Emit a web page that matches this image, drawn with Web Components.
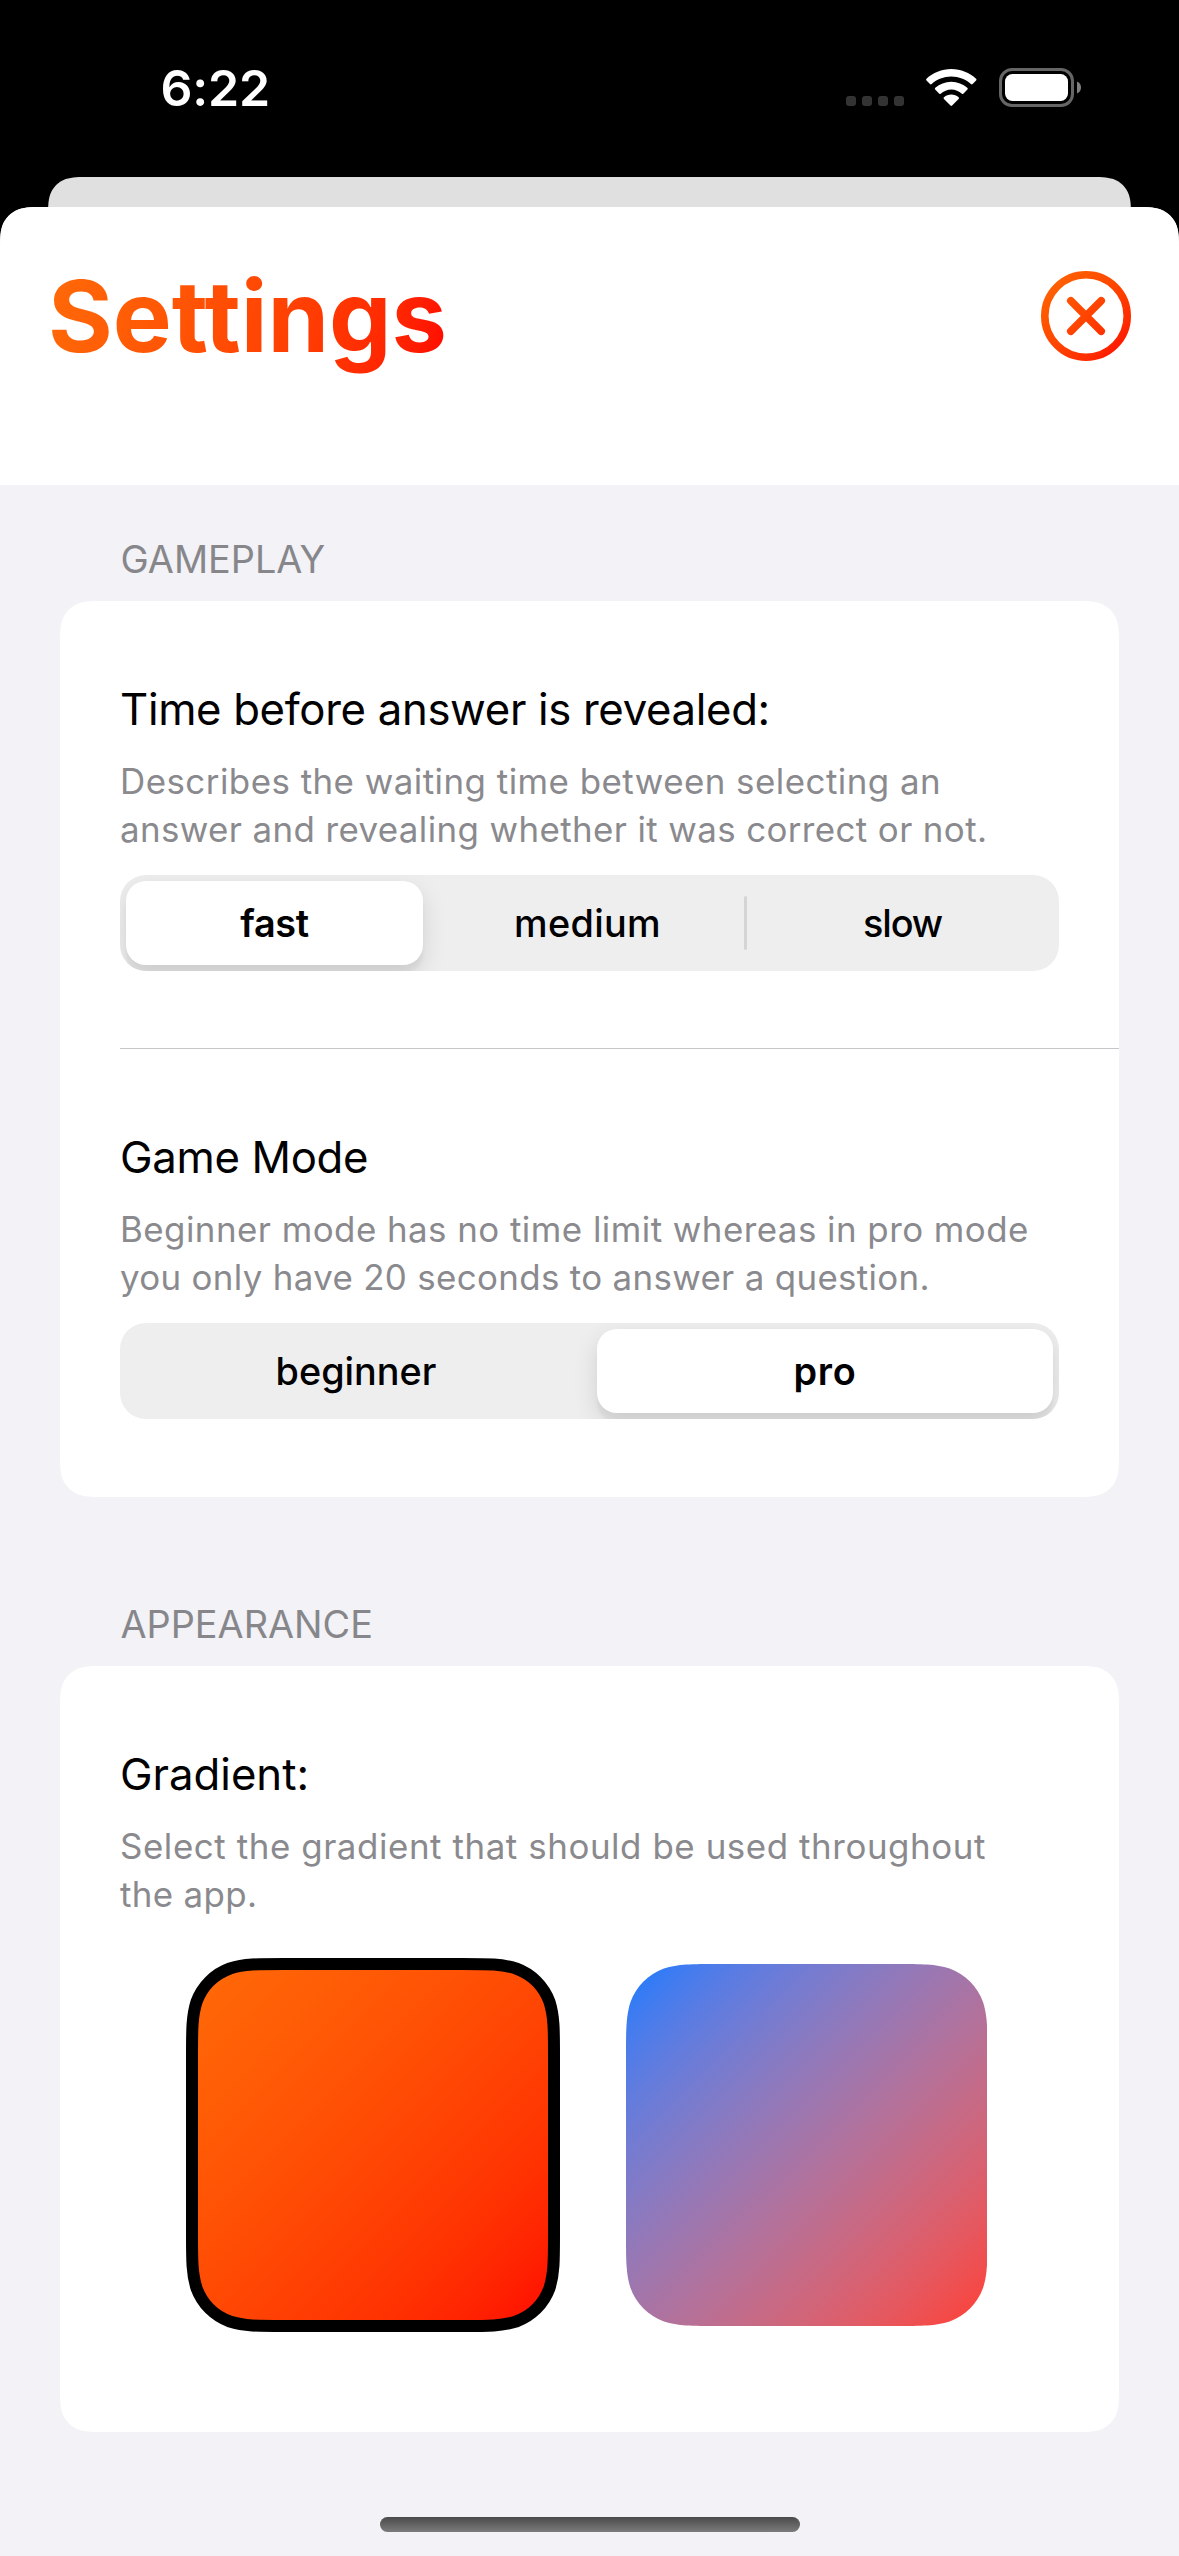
<!DOCTYPE html>
<html lang="en">
<head>
<meta charset="utf-8">
<title>Settings</title>
<style>
  body { margin: 0; background: #000; font-family: Inter, "Liberation Sans", sans-serif; color: #000; }
</style>
</head>
<body>
<settings-app>
  <status-bar time="6:22"></status-bar>
  <modal-sheet heading="Settings">
    <settings-section heading="GAMEPLAY">
      <setting-row divided>
        <span slot="title" style="letter-spacing:-.325px">Time before answer is revealed:</span>
        <text-line spacing=".47">Describes the waiting time between selecting an</text-line>
        <text-line spacing=".386">answer and revealing whether it was correct or not.</text-line>
        <segmented-control slot="control">
          <segment-item selected width="297" spacing="-.3">fast</segment-item>
          <segment-item width="307" spacing=".3">medium</segment-item>
          <segment-item divider width="301" spacing="-1.1">slow</segment-item>
        </segmented-control>
      </setting-row>
      <setting-row>
        <span slot="title" style="letter-spacing:-.32px">Game Mode</span>
        <text-line spacing=".46">Beginner mode has no time limit whereas in pro mode</text-line>
        <text-line spacing=".327">you only have 20 seconds to answer a question.</text-line>
        <segmented-control slot="control">
          <segment-item width="460" spacing="0">beginner</segment-item>
          <segment-item selected width="456" spacing=".7">pro</segment-item>
        </segmented-control>
      </setting-row>
    </settings-section>
    <settings-section heading="APPEARANCE">
      <setting-row>
        <span slot="title">Gradient:</span>
        <text-line spacing=".573">Select the gradient that should be used throughout</text-line>
        <text-line spacing=".354">the app.</text-line>
        <swatch-grid slot="control">
          <gradient-swatch selected from="#ff6a08" to="#ff0000"></gradient-swatch>
          <gradient-swatch from="#007aff" to="#ff3b30"></gradient-swatch>
        </swatch-grid>
      </setting-row>
    </settings-section>
  </modal-sheet>
  <home-indicator></home-indicator>
</settings-app>

<script>
// Rounded rectangle with continuous-curvature corners, as an SVG path string.
function continuousRect(x, y, w, h, r) {
  const k = [1.528665, 1.08849296, 0.86840694, 0.63149379, 0.37282383, 0.16905956, 0.07491139].map(v => v * r);
  const [a, b, c, d, e, f, g] = k;
  const R = x + w, B = y + h;
  return `M${x + a} ${y}L${R - a} ${y}C${R - b} ${y} ${R - c} ${y} ${R - d} ${y + g}` +
    `C${R - e} ${y + f} ${R - f} ${y + e} ${R - g} ${y + d}C${R} ${y + c} ${R} ${y + b} ${R} ${y + a}` +
    `L${R} ${B - a}C${R} ${B - b} ${R} ${B - c} ${R - g} ${B - d}` +
    `C${R - f} ${B - e} ${R - e} ${B - f} ${R - d} ${B - g}C${R - c} ${B} ${R - b} ${B} ${R - a} ${B}` +
    `L${x + a} ${B}C${x + b} ${B} ${x + c} ${B} ${x + d} ${B - g}` +
    `C${x + e} ${B - f} ${x + f} ${B - e} ${x + g} ${B - d}C${x} ${B - c} ${x} ${B - b} ${x} ${B - a}` +
    `L${x} ${y + a}C${x} ${y + b} ${x} ${y + c} ${x + g} ${y + d}` +
    `C${x + f} ${y + e} ${x + e} ${y + f} ${x + d} ${y + g}C${x + c} ${y} ${x + b} ${y} ${x + a} ${y}Z`;
}
function roundCorners(el, r, extra = 0) {
  el.style.clipPath = `path("${continuousRect(0, 0, el.offsetWidth, el.offsetHeight + extra, r)}")`;
}

class Base extends HTMLElement {
  connectedCallback() {
    if (this.shadowRoot) return;
    this.attachShadow({ mode: 'open' }).innerHTML = this.render();
  }
}

customElements.define('text-line', class extends Base {
  render() {
    return `<style>:host{display:block;white-space:nowrap;letter-spacing:${this.getAttribute('spacing')}px}</style><slot></slot>`;
  }
});

customElements.define('segment-item', class extends Base {
  render() {
    return `<style>
      :host{flex:0 0 ${this.getAttribute('width')}px;display:flex;align-items:center;justify-content:center;height:84px;position:relative;
        font-size:37.8px;font-weight:500;line-height:48px;letter-spacing:${this.getAttribute('spacing')}px}
      :host([selected]){font-weight:600;background:#fff;border-radius:20px;
        box-shadow:0 9px 24px rgba(0,0,0,.12),0 9px 3px rgba(0,0,0,.04)}
      :host([divider])::before{content:"";position:absolute;left:-8px;top:15px;width:3px;height:54px;border-radius:1.5px;background:#d5d5d6}
    </style><span><slot></slot></span>`;
  }
});

customElements.define('segmented-control', class extends Base {
  render() {
    return `<style>
      :host{display:flex;gap:11px;box-sizing:border-box;height:96px;padding:6px;border-radius:26px;background:#eee;overflow:hidden}
    </style><slot></slot>`;
  }
});

customElements.define('gradient-swatch', class extends Base {
  render() {
    const on = this.hasAttribute('selected');
    const ring = on
      ? `<svg width="374" height="374" viewBox="0 0 374 374"><path d="${continuousRect(6, 6, 362, 362, 60)}" fill="none" stroke="#000" stroke-width="12"/></svg>`
      : '';
    return `<style>
      :host{display:grid;width:362px;height:362px}
      .fill,svg{grid-area:1/1}
      .fill{background:linear-gradient(135deg in oklab,${this.getAttribute('from')},${this.getAttribute('to')});
        clip-path:path("${continuousRect(0, 0, 361.5, 362, 60)}")}
      svg{margin:-6px;z-index:1}
    </style><div class="fill"></div>${ring}`;
  }
});

customElements.define('swatch-grid', class extends Base {
  render() {
    return `<style>:host{display:flex;gap:72px;padding:24px 72px 28px}</style><slot></slot>`;
  }
});

customElements.define('setting-row', class extends Base {
  render() {
    return `<style>
      :host{display:flex;flex-direction:column;box-sizing:border-box;margin-left:60px;padding:82px 60px 78px 0}
      :host([divided]){border-bottom:1px solid #c6c6c8;padding-bottom:77px}
      .title{font-size:43.7px;line-height:54px}
      .desc{margin:20px 0 22px;font-size:34.9px;line-height:48px;color:#8a8a8e}
    </style>
    <div class="title"><slot name="title"></slot></div>
    <div class="desc"><slot></slot></div>
    <slot name="control"></slot>`;
  }
});

customElements.define('settings-section', class extends Base {
  render() {
    return `<style>
      :host{display:block}
      h2{margin:0 0 16px 60.5px;font-size:37.8px;line-height:52px;font-weight:400;color:#87878b}
      .card{background:#fff}
    </style><h2>${this.getAttribute('heading')}</h2><div class="card"><slot></slot></div>`;
  }
});

customElements.define('close-button', class extends Base {
  render() {
    return `<style>:host{display:block;width:90px;height:90px}svg{display:block}</style>
    <svg width="90" height="90" viewBox="0 0 90 90" fill="none" stroke="url(#g)" stroke-width="7.6" stroke-linecap="round">
      <defs><linearGradient id="g" gradientUnits="userSpaceOnUse" x1="0" y1="0" x2="90" y2="90">
        <stop stop-color="#ff6b0a"/><stop offset=".25" stop-color="#ff5800"/><stop offset=".5" stop-color="#ff4400"/><stop offset=".75" stop-color="#ff2c00"/><stop offset="1" stop-color="#ff0000"/>
      </linearGradient></defs>
      <circle cx="45" cy="45" r="41.2"/><path d="M29.8 29.8 60.2 60.2M60.2 29.8 29.8 60.2"/>
    </svg>`;
  }
});

customElements.define('modal-sheet', class extends Base {
  render() {
    return `<style>
      :host{display:block}
      .peek{height:60px;margin:0 48px -30px;background:#e0e0e0}
      .sheet{position:relative;height:2349px;background:#f2f2f7}
      header{box-sizing:border-box;height:278px;padding:49px 48px 0;background:#fff;display:flex;justify-content:space-between;align-items:flex-start}
      h1{margin:0;font-size:99px;line-height:120px;font-weight:700;letter-spacing:-.05px;
        background:linear-gradient(107deg in oklab,#ff6a08,#ff0000);-webkit-background-clip:text;background-clip:text;color:transparent}
      close-button{margin-top:15px}
      main{padding:48px 60px 0;display:flex;flex-direction:column;gap:101px}
    </style>
    <div class="peek"></div>
    <div class="sheet">
      <header><h1>${this.getAttribute('heading')}</h1><close-button></close-button></header>
      <main><slot></slot></main>
    </div>`;
  }
});

customElements.define('status-bar', class extends Base {
  render() {
    return `<style>
      :host{display:flex;justify-content:space-between;box-sizing:border-box;height:177px;padding:58px 98px 0 160.5px;background:#000;color:#fff}
      time{font-size:50px;line-height:60px;font-weight:600;letter-spacing:-.2px}
      .icons{display:flex;align-items:flex-end;height:49px}
      svg{display:block}
      .dots{margin:0 22px 1px 0}.wifi{margin:0 22.5px 1px 0}
    </style>
    <time>${this.getAttribute('time')}</time>
    <div class="icons">
      <svg class="dots" width="58" height="10" fill="#333"><rect width="10" height="10" rx="3"/><rect x="16" width="10" height="10" rx="3"/><rect x="32" width="10" height="10" rx="3"/><rect x="48" width="10" height="10" rx="3"/></svg>
      <svg class="wifi" width="50.6" height="37" viewBox="0 0 50.6 37" fill="#fff">
        <path d="M25.3 0C35 0 43.7 3.8 50.1 9.7q.8.9 0 1.8L46.6 15q-.8.8-1.7 0C39.7 10.4 32.8 7.6 25.3 7.6S10.9 10.4 5.7 15q-.9.8-1.7 0L.5 11.5q-.8-.9 0-1.8C6.9 3.8 15.6 0 25.3 0Z"/>
        <path d="M25.3 12.7C31.5 12.7 37 15 41.3 18.8q1 .9.1 1.8L37.6 24.6q-.8.8-1.7.1C33 22.1 29.3 20.4 25.3 20.4S17.6 22.1 14.7 24.7q-.9.7-1.7-.1L9.2 20.6q-.8-.9.1-1.8C13.6 15 19.1 12.7 25.3 12.7Z"/>
        <path d="M25.3 25.6c2.8 0 5.3 1 7.3 2.6q.9.8 0 1.7L26.1 36.5q-.8.8-1.6 0L18 29.9q-.9-.9 0-1.7c2-1.6 4.5-2.6 7.3-2.6Z"/>
      </svg>
      <svg class="battery" width="82" height="39" viewBox="0 0 82 39">
        <rect x="1.5" y="1.5" width="72" height="36" rx="11.5" fill="none" stroke="#666" stroke-width="3"/>
        <rect x="6" y="6" width="63" height="27" rx="7.5" fill="#fff"/>
        <path d="M78 13.5c2.5.9 4 3.2 4 6s-1.5 5.1-4 6Z" fill="#808080"/>
      </svg>
    </div>`;
  }
});

customElements.define('home-indicator', class extends Base {
  render() {
    return `<style>:host{position:absolute;left:380px;bottom:24px;width:420px;height:15px;border-radius:7.5px;background:linear-gradient(#4a4a4b,#7b7b7c)}</style>`;
  }
});

customElements.define('settings-app', class extends Base {
  render() {
    return `<style>:host{display:block;position:relative;width:1179px;height:2556px;overflow:hidden;background:#000}</style><slot></slot>`;
  }
});

for (const s of document.querySelectorAll('settings-section')) roundCorners(s.shadowRoot.querySelector('.card'), 30);
const sheetRoot = document.querySelector('modal-sheet').shadowRoot;
roundCorners(sheetRoot.querySelector('.peek'), 28, 60);
roundCorners(sheetRoot.querySelector('.sheet'), 30, 90);
</script>
</body>
</html>
